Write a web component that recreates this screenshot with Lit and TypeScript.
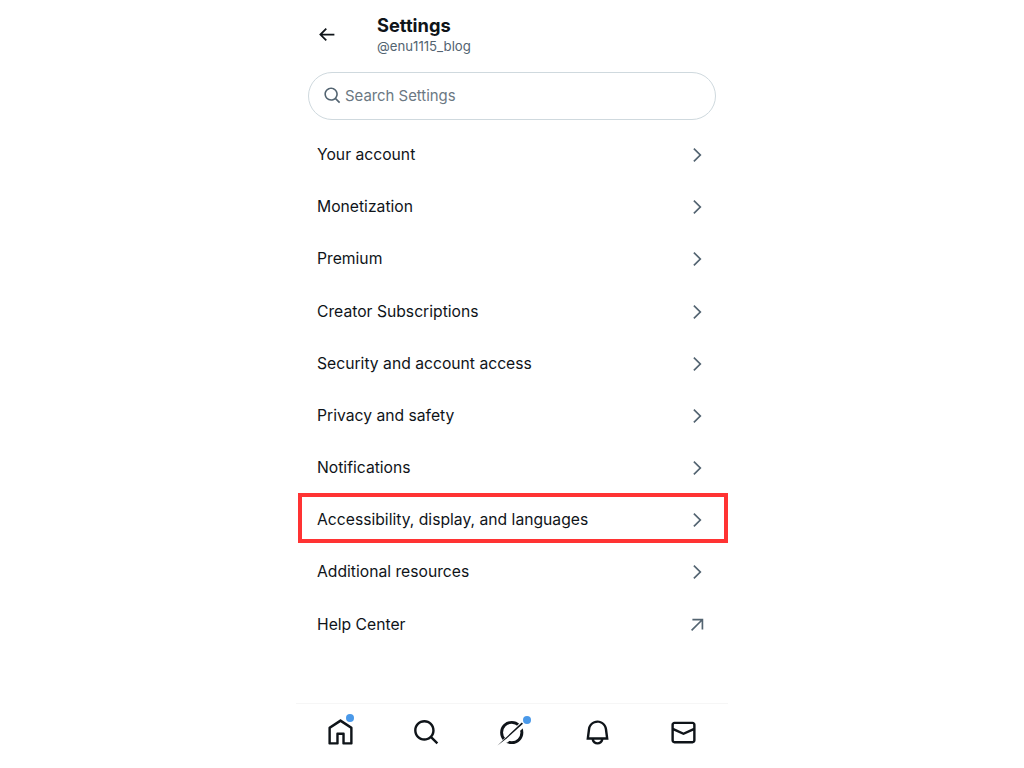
import { LitElement, html, css, svg } from "lit";
import { customElement } from "lit/decorators.js";

const rows = [
  "Your account",
  "Monetization",
  "Premium",
  "Creator Subscriptions",
  "Security and account access",
  "Privacy and safety",
  "Notifications",
  "Accessibility, display, and languages",
  "Additional resources",
  "Help Center",
];

const chevron = svg`<path d="M14.586 12L7.543 4.96l1.414-1.42L17.414 12l-8.457 8.46-1.414-1.42L14.586 12z"/>`;
const external = svg`<path d="M6.5 4.5h13v13h-2V7.9L6.2 19.2l-1.4-1.4L16.1 6.5H6.5z"/>`;

@customElement("app-root")
export class AppRoot extends LitElement {
  static styles = css`
    :host {
      display: block;
      height: 768px;
      overflow: hidden;
      background: #fff;
      font-family: Inter, "Noto Sans", sans-serif;
      color: #0f1419;
    }
    .phone {
      width: 432px;
      height: 768px;
      margin: 0 auto;
      display: flex;
      flex-direction: column;
      box-sizing: border-box;
    }
    .header {
      height: 72px;
      display: flex;
      align-items: flex-start;
      padding: 14px 0 0 20px;
      box-sizing: border-box;
    }
    .back {
      width: 21px;
      height: 21px;
      margin-top: 10px;
      fill: #0f1419;
      flex: none;
    }
    .titles {
      margin-left: 40px;
      display: flex;
      flex-direction: column;
    }
    .title {
      font-size: 18.3px;
      line-height: 23px;
      font-weight: 700;
    }
    .sub {
      font-size: 13.2px;
      line-height: 18px;
      color: #536471;
    }
    .search {
      height: 47.5px;
      margin: 0 12px 0.9px;
      box-sizing: border-box;
      border: 1px solid #cfd9de;
      border-radius: 24px;
      display: flex;
      align-items: center;
      gap: 3px;
      padding-left: 14px;
      font-size: 14.9px;
      color: #6b7883;
    }
    .search svg {
      width: 19px;
      height: 19px;
      fill: #536471;
      flex: none;
    }
    .list {
      margin-top: 8px;
      display: flex;
      flex-direction: column;
    }
    .row {
      position: relative;
      height: 52.2px;
      display: flex;
      align-items: center;
      justify-content: space-between;
      padding: 0 21px 0 21px;
      font-size: 15.7px;
    }
    .row svg {
      width: 20px;
      height: 20px;
      margin-top: 1px;
      fill: #536471;
      flex: none;
    }
    .mark {
      position: absolute;
      left: 2px;
      right: 0;
      top: -0.8px;
      bottom: 3px;
      border: 4px solid #ff3333;
    }
    .nav {
      margin-top: auto;
      height: 64px;
      border-top: 1px solid #f6f6f6;
      padding: 0 2px;
      display: grid;
      grid-template-columns: repeat(5, 1fr);
      justify-items: center;
    }
    .tab {
      position: relative;
      width: 29px;
      height: 29px;
      margin-top: 14px;
    }
    .tab svg {
      display: block;
      width: 29px;
      height: 29px;
      fill: #0f1419;
      overflow: visible;
    }
    .dot {
      position: absolute;
      width: 8px;
      height: 8px;
      border-radius: 50%;
      background: #4a99e9;
    }
    .dot.home {
      left: 19.5px;
      top: -4.5px;
    }
    .dot.grok {
      left: 25.5px;
      top: -2.5px;
    }
  `;

  render() {
    return html`
      <div class="phone">
        <div class="header">
          <svg class="back" viewBox="0 0 24 24"><path d="M7.414 13l5.043 5.04-1.414 1.42L3.586 12l7.457-7.46 1.414 1.42L7.414 11H21v2H7.414z"/></svg>
          <div class="titles">
            <span class="title">Settings</span>
            <span class="sub">@enu1115_blog</span>
          </div>
        </div>
        <div class="search">
          <svg viewBox="0 0 24 24"><path d="M10.25 3.75c-3.59 0-6.5 2.91-6.5 6.5s2.91 6.5 6.5 6.5c1.795 0 3.419-.726 4.596-1.904 1.178-1.177 1.904-2.801 1.904-4.596 0-3.59-2.91-6.5-6.5-6.5zm-8.5 6.5c0-4.694 3.806-8.5 8.5-8.5s8.5 3.806 8.5 8.5c0 1.986-.682 3.815-1.824 5.262l4.781 4.781-1.414 1.414-4.781-4.781c-1.447 1.142-3.276 1.824-5.262 1.824-4.694 0-8.5-3.806-8.5-8.5z"/></svg>
          <span>Search Settings</span>
        </div>
        <div class="list">
          ${rows.map(
            (r, i) => html`
              <div class="row">
                <span>${r}</span>
                <svg viewBox="0 0 24 24">${i === 9 ? external : chevron}</svg>
                ${i === 7 ? html`<div class="mark"></div>` : ""}
              </div>
            `
          )}
        </div>
        <div class="nav">
          <div class="tab">
            <svg viewBox="0 0 24 24"><path d="M21.591 7.146L12.52 1.157c-.316-.21-.724-.21-1.04 0l-9.071 5.99c-.26.173-.409.456-.409.757v13.183c0 .502.418.913.929.913h6.638c.511 0 .929-.41.929-.913v-7.075h3.008v7.075c0 .502.418.913.929.913h6.639c.51 0 .928-.41.928-.913V7.904c0-.301-.158-.584-.408-.758zM20 20l-4.5.01.011-7.097c0-.502-.418-.913-.928-.913H9.44c-.511 0-.929.41-.929.913L8.5 20H4V8.773l8.011-5.342L20 8.764z"/></svg>
            <span class="dot home"></span>
          </div>
          <div class="tab">
            <svg viewBox="0 0 24 24"><path d="M10.25 3.75c-3.59 0-6.5 2.91-6.5 6.5s2.91 6.5 6.5 6.5c1.795 0 3.419-.726 4.596-1.904 1.178-1.177 1.904-2.801 1.904-4.596 0-3.59-2.91-6.5-6.5-6.5zm-8.5 6.5c0-4.694 3.806-8.5 8.5-8.5s8.5 3.806 8.5 8.5c0 1.986-.682 3.815-1.824 5.262l4.781 4.781-1.414 1.414-4.781-4.781c-1.447 1.142-3.276 1.824-5.262 1.824-4.694 0-8.5-3.806-8.5-8.5z"/></svg>
          </div>
          <div class="tab">
            <svg viewBox="0 0 24 24">
              <circle cx="12.2" cy="12" r="8.4" fill="none" stroke="#0f1419" stroke-width="2.4"/>
              <path d="M-1 24L19 4l4 3L9 20z" fill="#fff"/>
              <path d="M.4 22.8L20.5 3.8l1 1L8 17z" fill="#0f1419"/>
            </svg>
            <span class="dot grok"></span>
          </div>
          <div class="tab">
            <svg viewBox="0 0 24 24"><path d="M19.993 9.042C19.48 5.017 16.054 2 11.996 2s-7.49 3.021-7.999 7.051L2.866 18H7.1c.463 2.282 2.481 4 4.9 4s4.437-1.718 4.9-4h4.236l-1.143-8.958zM12 20c-1.306 0-2.417-.835-2.829-2h5.658c-.412 1.165-1.523 2-2.829 2zm-6.866-4l.847-6.698C6.364 6.272 8.941 4 11.996 4s5.627 2.268 6.013 5.295L18.864 16H5.134z"/></svg>
          </div>
          <div class="tab">
            <svg viewBox="0 0 24 24"><path d="M1.998 5.5c0-1.381 1.119-2.5 2.5-2.5h15c1.381 0 2.5 1.119 2.5 2.5v13c0 1.381-1.119 2.5-2.5 2.5h-15c-1.381 0-2.5-1.119-2.5-2.5v-13zm2.5-.5c-.276 0-.5.224-.5.5v2.764l8 3.638 8-3.636V5.5c0-.276-.224-.5-.5-.5h-15zm15.5 5.463l-8 3.636-8-3.638V18.5c0 .276.224.5.5.5h15c.276 0 .5-.224.5-.5v-8.037z"/></svg>
          </div>
        </div>
      </div>
    `;
  }
}
